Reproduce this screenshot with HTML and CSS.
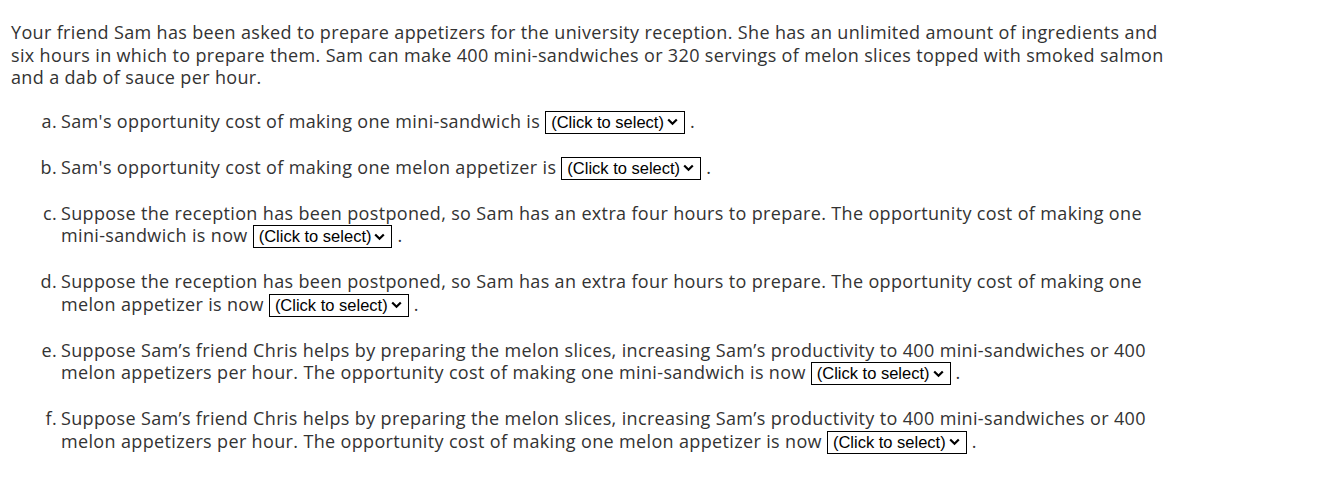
FILE: index.html
```html
<!DOCTYPE html>
<html>
<head>
<meta charset="utf-8">
<link rel="stylesheet" href="styles.css">
</head>
<body>
<div class="question">
  <p class="intro">Your friend Sam has been asked to prepare appetizers for the university reception. She has an unlimited amount of ingredients and six hours in which to prepare them. Sam can make 400 <span class="nw">mini-sandwiches</span> or 320 servings of melon slices topped with smoked salmon and a dab of sauce per hour.</p>
  <ol class="parts">
    <li class="part"><span class="label">a.</span><span class="body">Sam's opportunity cost of making one <span class="nw">mini-sandwich</span> is <span class="select">(Click to select)<svg class="chev" viewBox="0 0 11 8" width="11" height="8"><path d="M1.2 1.5 L5.5 5.8 L9.8 1.5" /></svg></span> .</span></li>
    <li class="part"><span class="label">b.</span><span class="body">Sam's opportunity cost of making one melon appetizer is <span class="select">(Click to select)<svg class="chev" viewBox="0 0 11 8" width="11" height="8"><path d="M1.2 1.5 L5.5 5.8 L9.8 1.5" /></svg></span> .</span></li>
    <li class="part"><span class="label">c.</span><span class="body">Suppose the reception has been postponed, so Sam has an extra four hours to prepare. The opportunity cost of making one <span class="nw">mini-sandwich</span> is now <span class="select">(Click to select)<svg class="chev" viewBox="0 0 11 8" width="11" height="8"><path d="M1.2 1.5 L5.5 5.8 L9.8 1.5" /></svg></span> .</span></li>
    <li class="part"><span class="label">d.</span><span class="body">Suppose the reception has been postponed, so Sam has an extra four hours to prepare. The opportunity cost of making one melon appetizer is now <span class="select">(Click to select)<svg class="chev" viewBox="0 0 11 8" width="11" height="8"><path d="M1.2 1.5 L5.5 5.8 L9.8 1.5" /></svg></span> .</span></li>
    <li class="part"><span class="label">e.</span><span class="body">Suppose Sam’s friend Chris helps by preparing the melon slices, increasing Sam’s productivity to 400 <span class="nw">mini-sandwiches</span> or 400 melon appetizers per hour. The opportunity cost of making one <span class="nw">mini-sandwich</span> is now <span class="select">(Click to select)<svg class="chev" viewBox="0 0 11 8" width="11" height="8"><path d="M1.2 1.5 L5.5 5.8 L9.8 1.5" /></svg></span> .</span></li>
    <li class="part"><span class="label">f.</span><span class="body">Suppose Sam’s friend Chris helps by preparing the melon slices, increasing Sam’s productivity to 400 <span class="nw">mini-sandwiches</span> or 400 melon appetizers per hour. The opportunity cost of making one melon appetizer is now <span class="select">(Click to select)<svg class="chev" viewBox="0 0 11 8" width="11" height="8"><path d="M1.2 1.5 L5.5 5.8 L9.8 1.5" /></svg></span> .</span></li>
  </ol>
</div>
</body>
</html>
```
FILE: styles.css
```css
html, body {
  margin: 0;
  padding: 0;
  background: #ffffff;
}

.question {
  width: 1168px;
  padding: 21px 0 0 11px;
  font-family: "Open Sans", "Liberation Sans", sans-serif;
  font-size: 18px;
  line-height: 22.5px;
  letter-spacing: 0.35px;
  color: #333333;
}

.nw {
  white-space: nowrap;
}

.intro {
  margin: 0 0 21px 0;
}

.parts {
  list-style: none;
  margin: 0;
  padding: 0 0 0 26px;
}

.part {
  display: grid;
  grid-template-columns: 20px 1fr;
  column-gap: 4px;
  margin-bottom: 23px;
}

.label {
  text-align: right;
}

.select {
  display: inline-flex;
  align-items: center;
  gap: 3px;
  border: 1px solid #000000;
  padding: 0 6px 0 5px;
  height: 21px;
  margin: -1px 0;
  font-family: "Liberation Sans", Arial, sans-serif;
  font-size: 16.5px;
  line-height: 21px;
  letter-spacing: 0;
  color: #000000;
  vertical-align: baseline;
  box-sizing: content-box;
}

.chev {
  fill: none;
  stroke: #000000;
  stroke-width: 2.2;
}
```
